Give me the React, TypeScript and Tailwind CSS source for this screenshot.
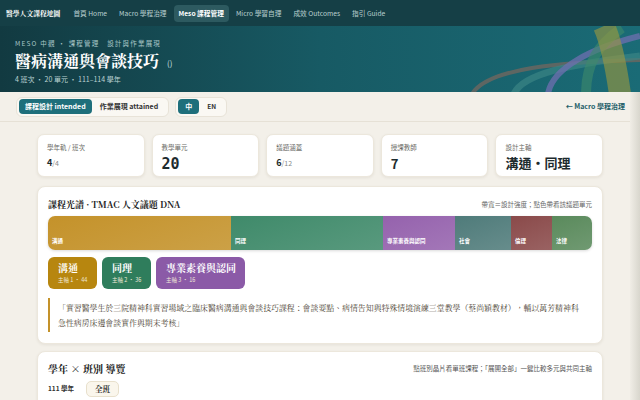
import React from "react";

const sans = { fontFamily: '"Noto Sans CJK TC", "Noto Sans", sans-serif' };
const serif = { fontFamily: '"Noto Serif CJK TC", "Liberation Serif", "Noto Sans CJK TC", serif' };

function StatCard({ label, children }: { label: string; children: React.ReactNode }) {
  return (
    <div className="flex-1 h-[43px] rounded-[7px] bg-white shadow-[0_1px_3px_rgba(60,50,30,0.08)] border border-[#ece7dc] px-[9px] pt-[9px]">
      <div className="text-[6.5px] text-[#6b6b66] leading-none">{label}</div>
      {children}
    </div>
  );
}

const segs = [
  { name: "溝通", w: 183, c: "#c4922a" },
  { name: "同理", w: 152, c: "#3f8a6a" },
  { name: "專業素養與認同", w: 72, c: "#9562ad" },
  { name: "社會", w: 56, c: "#4f7b7a" },
  { name: "倫理", w: 41, c: "#8a4a4a" },
  { name: "法律", w: 0, c: "#5a8a5c" },
];

const navItems = ["首頁 Home", "Macro 學程治理", "Meso 課程管理", "Micro 學習自理", "成效 Outcomes", "指引 Guide"];

export default function App() {
  return (
    <div className="w-[640px] h-[400px] overflow-hidden bg-[#f3f0e9]" style={sans}>
      {/* nav */}
      <div className="h-[26px] bg-[#153f46] flex items-center pl-[6px] gap-[2px]">
        <div className="text-white text-[6.8px] font-bold mr-[6px]" style={serif}>醫學人文課程地圖</div>
        {navItems.map((t, i) => (
          <div
            key={t}
            className={
              "px-[5px] h-[17px] flex items-center rounded-[4px] text-[6.7px] " +
              (i === 2 ? "bg-[#2d5a60] text-white font-bold" : "text-[#b9cfd0]")
            }
          >
            {t}
          </div>
        ))}
      </div>
      {/* hero */}
      <div className="relative h-[66px] bg-gradient-to-r from-[#123a41] via-[#175a64] to-[#1a6b76] pl-[15px] pt-[14px] overflow-hidden">
        <svg className="absolute left-0 top-0" width="640" height="66" viewBox="0 0 640 66">
          <path d="M 472 68 C 488 42, 560 36, 640 34" stroke="#6a6660" strokeWidth="4" fill="none" opacity="0.85" />
          <path d="M 514 68 C 522 48, 570 38, 640 30" stroke="#3a8585" strokeWidth="7" fill="none" opacity="0.7" />
          <path d="M 548 68 C 552 42, 592 22, 640 10" stroke="#6f6fb0" strokeWidth="6" fill="none" opacity="0.75" />
          <path d="M 586 68 C 586 38, 598 18, 622 2" stroke="#3e8a6a" strokeWidth="10" fill="none" opacity="0.6" />
          <path d="M 620 68 C 616 40, 612 18, 604 0" stroke="#a09a3c" strokeWidth="22" fill="none" opacity="0.6" />
        </svg>
        <div className="relative">
          <div className="text-[6.5px] tracking-[1.2px] text-[#a9c7c8] leading-none">MESO 中觀 · 課程管理　設計與作業展現</div>
          <div className="flex items-end mt-[6px] leading-none">
            <span className="text-white text-[16px] font-bold" style={serif}>醫病溝通與會談技巧</span>
            <span className="text-[#cfe0e0] text-[8px] ml-[8px] mb-[2px]">()</span>
          </div>
          <div className="text-[7px] text-[#bcd3d3] mt-[7px] leading-none">4 班次 · 20 單元 · 111–114 學年</div>
        </div>
      </div>
      {/* body */}
      <div className="flex h-[308px]">
        <div className="flex-1 min-w-0">
          {/* toolbar */}
          <div className="h-[30px] flex items-center pl-[16px] pr-[5px] border-b border-[#e6e1d6]">
            <div className="flex items-center bg-[#faf8f3] border border-[#e8e3d8] rounded-[6px] p-[2px] h-[20px]">
              <div className="h-[15px] px-[6px] flex items-center rounded-[4px] bg-[#1e6f7b] text-white text-[7px] font-bold">課程設計 intended</div>
              <div className="h-[15px] px-[8px] flex items-center text-[#333] text-[7px] font-bold">作業展現 attained</div>
            </div>
            <div className="flex items-center bg-[#faf8f3] border border-[#e8e3d8] rounded-[6px] p-[2px] h-[20px] ml-[6px]">
              <div className="h-[15px] w-[21px] justify-center flex items-center rounded-[4px] bg-[#1e6f7b] text-white text-[7px] font-bold">中</div>
              <div className="h-[15px] px-[8px] flex items-center text-[#333] text-[6.5px] font-bold">EN</div>
            </div>
            <div className="ml-auto text-[7px] font-bold text-[#1e5f6a]">← Macro 學程治理</div>
          </div>
          <div className="pl-[37px] pr-[27px] pt-[12px]">
            {/* stats */}
            <div className="flex gap-[7px]">
              <StatCard label="學年軌 / 班次">
                <div className="mt-[7px] text-[9px] font-bold text-[#1d2b2e] leading-none">4<span className="text-[7px] font-normal text-[#888]">/4</span></div>
              </StatCard>
              <StatCard label="教學單元">
                <div className="mt-[6px] text-[15px] font-bold text-[#1d2b2e] leading-none" style={{ fontFamily: '"DejaVu Sans Mono", monospace' }}>20</div>
              </StatCard>
              <StatCard label="議題涵蓋">
                <div className="mt-[7px] text-[9px] font-bold text-[#1d2b2e] leading-none">6<span className="text-[7px] font-normal text-[#888]">/12</span></div>
              </StatCard>
              <StatCard label="授課教師">
                <div className="mt-[6px] text-[13px] font-bold text-[#1d2b2e] leading-none">7</div>
              </StatCard>
              <StatCard label="設計主軸">
                <div className="mt-[5px] text-[13px] font-bold text-[#1d2b2e] leading-none">溝通·同理</div>
              </StatCard>
            </div>
            {/* DNA card */}
            <div className="mt-[9px] h-[158px] rounded-[8px] bg-white border border-[#ece7dc] shadow-[0_1px_3px_rgba(60,50,30,0.08)] px-[10px] pt-[11px]">
              <div className="flex items-center justify-between">
                <div className="text-[9px] font-bold text-[#222]" style={serif}>課程光譜 · TMAC 人文議題 DNA</div>
                <div className="text-[6.5px] text-[#666]">帶寬＝設計強度；點色帶看該議題單元</div>
              </div>
              <div className="mt-[4px] flex h-[34px] rounded-[7px] overflow-hidden shadow-[0_1px_3px_rgba(0,0,0,0.15)]">
                {segs.map((s) => (
                  <div
                    key={s.name}
                    className={"h-full flex items-end pl-[4px] pb-[4px] text-[5.5px] font-bold text-white whitespace-nowrap overflow-hidden " + (s.w ? "shrink-0" : "flex-1")}
                    style={{ width: s.w ? s.w : undefined, background: `linear-gradient(160deg, ${s.c}, ${s.c}dd)` }}
                  >
                    {s.name}
                  </div>
                ))}
              </div>
              <div className="mt-[7px] flex gap-[5px]">
                {[
                  { t: "溝通", s: "主軸 1 · 44", c: "#b7860f" },
                  { t: "同理", s: "主軸 2 · 36", c: "#2f7d5c" },
                  { t: "專業素養與認同", s: "主軸 3 · 16", c: "#8b5aa7" },
                ].map((ch) => (
                  <div key={ch.t} className="h-[32px] min-w-[49px] rounded-[6px] pl-[10px] pr-[9px] pt-[6px] whitespace-nowrap" style={{ background: ch.c }}>
                    <div className="text-[10px] font-bold text-white leading-none" style={serif}>{ch.t}</div>
                    <div className="text-[5.5px] text-[#f0e8d8] mt-[5px] leading-none">{ch.s}</div>
                  </div>
                ))}
              </div>
              <div className="mt-[9px] border-l-[2px] border-[#c4922a] pl-[8px] py-[2px] text-[7.9px] leading-[15px] text-[#4b3f33] whitespace-nowrap" style={serif}>
                「實習醫學生於三院精神科實習場域之臨床醫病溝通與會談技巧課程：會談要點、病情告知與特殊情境演練三堂教學（蔡尚穎教材），輔以萬芳精神科
                <br />
                急性病房床邊會談實作與期末考核」
              </div>
            </div>
            {/* year card */}
            <div className="mt-[7px] h-[60px] rounded-[8px] bg-white border border-[#ece7dc] shadow-[0_1px_3px_rgba(60,50,30,0.08)] px-[10px] pt-[9px]">
              <div className="flex items-center justify-between">
                <div className="text-[10px] font-bold text-[#222]" style={serif}>學年 × 班別 導覽</div>
                <div className="text-[6.5px] text-[#555]">點班別晶片看單班課程；「展開全部」一鍵比較多元與共同主軸</div>
              </div>
              <div className="mt-[5px] flex items-center">
                <div className="text-[6.5px] font-bold text-[#333] w-[38px]">111 學年</div>
                <div className="h-[16px] px-[8px] flex items-center rounded-[5px] bg-[#faf6ec] border border-[#e8e0cc] text-[7.5px] font-bold text-[#333]" style={serif}>全班</div>
              </div>
            </div>
          </div>
        </div>
        <div className="w-[10px] bg-gradient-to-r from-[#f0ede6] to-[#d8d6cd]" />
      </div>
    </div>
  );
}
